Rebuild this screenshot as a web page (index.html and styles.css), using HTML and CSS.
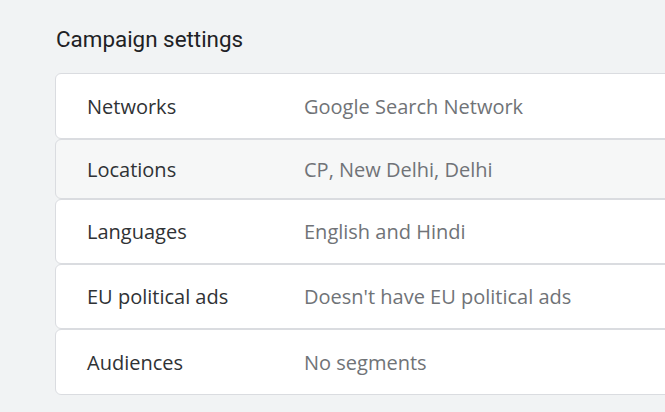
FILE: index.html
```
<!DOCTYPE html>
<html lang="en">
<head>
  <meta charset="UTF-8">
  <title>Campaign settings</title>
  <link rel="stylesheet" href="styles.css">
</head>
<body>
  <div class="page">
    <h2 class="section-title">Campaign settings</h2>

    <div class="settings-list">
      <div class="setting-row">
        <div class="setting-label">Networks</div>
        <div class="setting-value">Google Search Network</div>
      </div>
      <div class="setting-row is-hover">
        <div class="setting-label">Locations</div>
        <div class="setting-value">CP, New Delhi, Delhi</div>
      </div>
      <div class="setting-row">
        <div class="setting-label">Languages</div>
        <div class="setting-value">English and Hindi</div>
      </div>
      <div class="setting-row">
        <div class="setting-label">EU political ads</div>
        <div class="setting-value">Doesn't have EU political ads</div>
      </div>
      <div class="setting-row">
        <div class="setting-label">Audiences</div>
        <div class="setting-value">No segments</div>
      </div>
    </div>
  </div>
</body>
</html>
```

FILE: styles.css
```
* {
  margin: 0;
  padding: 0;
  box-sizing: border-box;
}

body {
  font-family: Roboto, "Open Sans", sans-serif;
  background: #f1f3f4;
  color: #202124;
  overflow: hidden;
}

.page {
  padding: 26px 0 0 55px;
}

.section-title {
  font-size: 22.4px;
  line-height: 26px;
  font-weight: 400;
  color: #202124;
  padding-left: 1px;
  margin-bottom: 21px;
}

.settings-list {
  display: flex;
  flex-direction: column;
  margin-right: -20px;
}

.setting-row {
  display: flex;
  align-items: center;
  height: 65px;
  background: #ffffff;
  border: 1px solid #dadce0;
  border-radius: 6px;
  padding-left: 31px;
  font-family: "Open Sans", sans-serif;
  font-size: 20px;
}

.setting-row:first-child,
.setting-row:last-child {
  height: 66px;
}

.setting-row.is-hover {
  background: #f6f7f7;
  height: 60px;
}

.setting-label {
  width: 217px;
  color: #2f3235;
  font-weight: 500;
}

.setting-value {
  color: #707377;
}
```
